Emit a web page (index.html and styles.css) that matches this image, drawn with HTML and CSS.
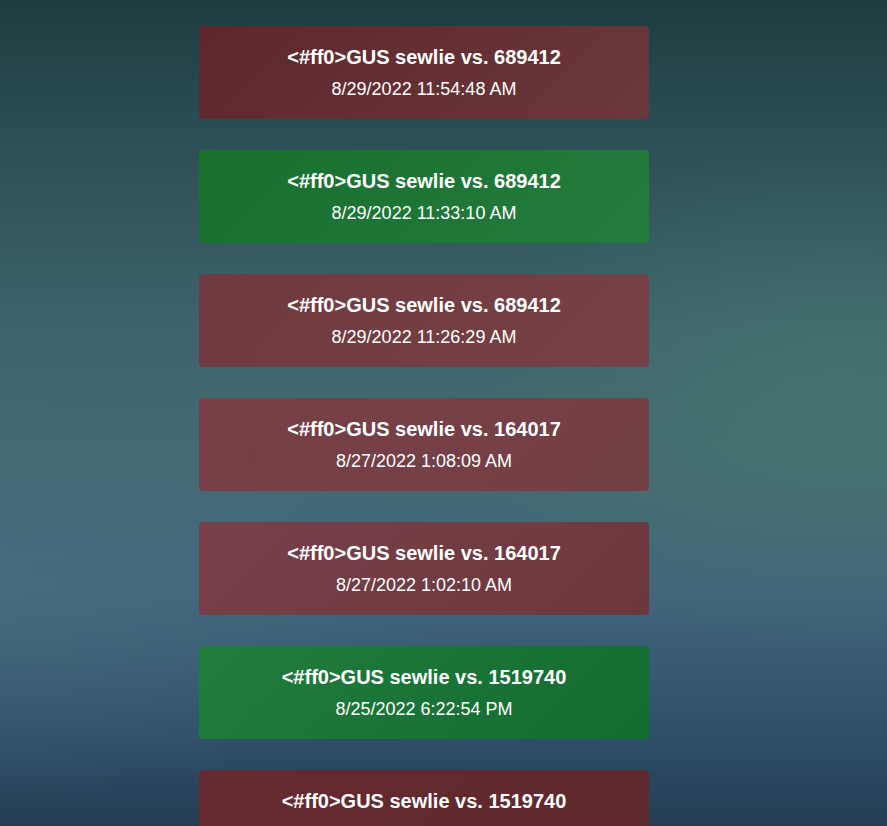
FILE: index.html
```html
<!DOCTYPE html>
<html lang="en">
<head>
<meta charset="utf-8">
<title>Matches</title>
<link rel="stylesheet" href="styles.css">
</head>
<body>
<main class="list">
  <div class="card loss tone-a">
    <div class="title">&lt;#ff0&gt;GUS sewlie vs. 689412</div>
    <div class="date">8/29/2022 11:54:48 AM</div>
  </div>
  <div class="card win tone-a">
    <div class="title">&lt;#ff0&gt;GUS sewlie vs. 689412</div>
    <div class="date">8/29/2022 11:33:10 AM</div>
  </div>
  <div class="card loss tone-b">
    <div class="title">&lt;#ff0&gt;GUS sewlie vs. 689412</div>
    <div class="date">8/29/2022 11:26:29 AM</div>
  </div>
  <div class="card loss tone-c">
    <div class="title">&lt;#ff0&gt;GUS sewlie vs. 164017</div>
    <div class="date">8/27/2022 1:08:09 AM</div>
  </div>
  <div class="card loss tone-d">
    <div class="title">&lt;#ff0&gt;GUS sewlie vs. 164017</div>
    <div class="date">8/27/2022 1:02:10 AM</div>
  </div>
  <div class="card win tone-b">
    <div class="title">&lt;#ff0&gt;GUS sewlie vs. 1519740</div>
    <div class="date">8/25/2022 6:22:54 PM</div>
  </div>
  <div class="card loss tone-e">
    <div class="title">&lt;#ff0&gt;GUS sewlie vs. 1519740</div>
    <div class="date">8/25/2022 6:10:31 PM</div>
  </div>
</main>
</body>
</html>
```
FILE: styles.css
```css
html, body {
  margin: 0;
  padding: 0;
  height: 100%;
  overflow: hidden;
}

body {
  font-family: "Liberation Sans", Arial, sans-serif;
  color: #ffffff;
  background:
    radial-gradient(ellipse 45% 30% at 95% 48%, rgba(74, 125, 112, 0.55), rgba(74, 125, 112, 0) 100%),
    radial-gradient(ellipse 50% 25% at 0% 72%, rgba(74, 112, 130, 0.5), rgba(74, 112, 130, 0) 100%),
    linear-gradient(180deg, #1f3c40 0%, #2c5056 18%, #3d636c 40%, #436a72 55%, #41657a 72%, #30506a 88%, #243d54 100%);
}

.list {
  display: flex;
  flex-direction: column;
  gap: 31px;
  width: 450px;
  margin-left: 199px;
  padding-top: 26px;
}

.card {
  border-radius: 4px;
  padding: 20px 0 20px;
  text-align: center;
}

.title {
  font-size: 20px;
  font-weight: bold;
  line-height: 23px;
}

.date {
  font-size: 18px;
  line-height: 20px;
  margin-top: 10px;
}

.loss.tone-a { background: linear-gradient(135deg, #5d282c 0%, #6a373a 100%); }
.loss.tone-b { background: linear-gradient(135deg, #6e3a3f 0%, #774247 100%); }
.loss.tone-c { background: linear-gradient(135deg, #773f46 0%, #734045 100%); }
.loss.tone-d { background: linear-gradient(135deg, #78414a 0%, #6c373c 100%); }
.loss.tone-e { background: linear-gradient(135deg, #66292f 0%, #5e2a2e 100%); }

.win.tone-a { background: linear-gradient(135deg, #18702f 0%, #237b3d 100%); }
.win.tone-b { background: linear-gradient(135deg, #217c3d 0%, #136c30 100%); }
```
